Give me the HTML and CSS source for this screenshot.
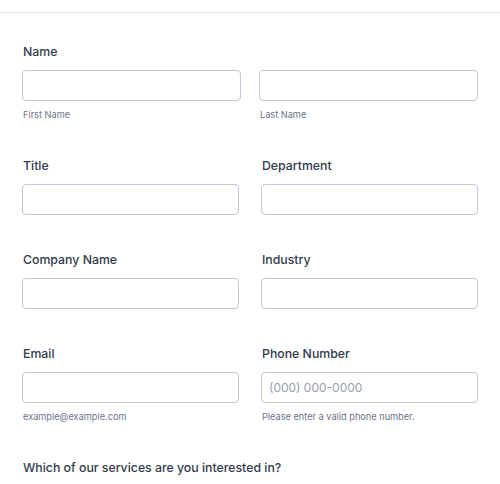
FILE: index.html
```html
<!DOCTYPE html>
<html lang="en">
<head>
    <meta charset="UTF-8">
    <title>Contact form</title>
    <link rel="stylesheet" href="styles.css">
</head>
<body>
<div class="form-top"></div>
<form class="form-list">
    <div class="form-line">
        <label class="form-label">Name</label>
        <div class="form-pair form-pair-name">
            <div class="form-sub">
                <input class="form-input" type="text" name="firstName">
                <span class="form-sublabel">First Name</span>
            </div>
            <div class="form-sub">
                <input class="form-input" type="text" name="lastName">
                <span class="form-sublabel">Last Name</span>
            </div>
        </div>
    </div>

    <div class="form-pair">
        <div class="form-line">
            <label class="form-label">Title</label>
            <input class="form-input" type="text" name="title">
        </div>
        <div class="form-line">
            <label class="form-label">Department</label>
            <input class="form-input" type="text" name="department">
        </div>
    </div>

    <div class="form-pair">
        <div class="form-line">
            <label class="form-label">Company Name</label>
            <input class="form-input" type="text" name="company">
        </div>
        <div class="form-line">
            <label class="form-label">Industry</label>
            <input class="form-input" type="text" name="industry">
        </div>
    </div>

    <div class="form-pair">
        <div class="form-line">
            <label class="form-label">Email</label>
            <input class="form-input" type="email" name="email">
            <span class="form-sublabel">example@example.com</span>
        </div>
        <div class="form-line">
            <label class="form-label">Phone Number</label>
            <input class="form-input" type="tel" name="phone" placeholder="(000) 000-0000">
            <span class="form-sublabel">Please enter a valid phone number.</span>
        </div>
    </div>

    <div class="form-line">
        <label class="form-label">Which of our services are you interested in?</label>
    </div>
</form>
</body>
</html>
```

FILE: styles.css
```css
body {
    margin: 0;
    background: #fff;
    font-family: Inter, "Noto Sans", sans-serif;
    color: #2c3345;
}

.form-top {
    height: 12px;
    border-bottom: 1px solid #e3e5ec;
}

.form-list {
    padding: 31px 22px 0;
}

.form-line {
    display: flex;
    flex-direction: column;
    padding-bottom: 37px;
}

.form-pair {
    display: grid;
    grid-template-columns: 1fr 1fr;
    column-gap: 22px;
}

.form-pair-name {
    column-gap: 18px;
}

.form-sub {
    display: flex;
    flex-direction: column;
}

.form-label {
    padding-left: 1px;
    font-size: 12.3px;
    font-weight: 500;
    line-height: 16px;
    margin-bottom: 10px;
    color: #323a4e;
}

.form-input {
    box-sizing: border-box;
    width: 100%;
    height: 31px;
    margin: 0;
    padding: 0 7px;
    border: 1px solid #c4c7d5;
    border-radius: 4px;
    font-family: inherit;
    font-size: 12px;
    color: #2c3345;
    background: #fff;
}

.form-input::placeholder {
    color: #9aa0ae;
}

.form-sublabel {
    margin-top: 7px;
    padding-left: 1px;
    font-size: 9.2px;
    line-height: 13px;
    color: #6c7489;
}
```
